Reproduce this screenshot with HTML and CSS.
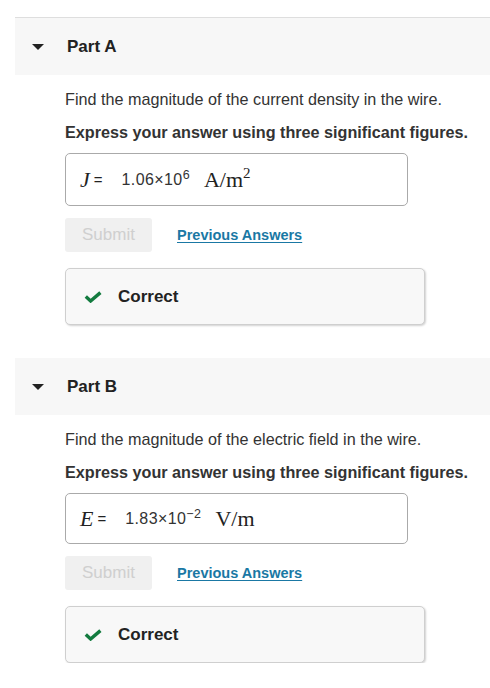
FILE: index.html
```html
<!DOCTYPE html>
<html>
<head>
<meta charset="utf-8">
<link rel="stylesheet" href="styles.css">
</head>
<body>
<div class="page">
  <section class="part part-first">
    <div class="part-head">
      <span class="caret"></span>
      <h2 class="part-title">Part A</h2>
    </div>
    <div class="part-body">
      <p class="question">Find the magnitude of the current density in the wire.</p>
      <p class="instr">Express your answer using three significant figures.</p>
      <div class="answer answer-tall">
        <span class="var">J</span><span class="eq">=</span>
        <span class="num">1.06×10<sup class="exp">6</sup></span>
        <span class="unit">A/m<sup class="uexp">2</sup></span>
      </div>
      <div class="actions">
        <span class="submit">Submit</span>
        <a class="prev" href="#">Previous Answers</a>
      </div>
      <div class="result">
        <svg class="check" width="18" height="12" viewBox="0 0 18 12"><path d="M1.8 5.6 L6.6 10 L16.4 1.6" fill="none" stroke="#137b3f" stroke-width="3.4"/></svg>
        <span class="result-text">Correct</span>
      </div>
    </div>
  </section>
  <section class="part">
    <div class="part-head">
      <span class="caret"></span>
      <h2 class="part-title">Part B</h2>
    </div>
    <div class="part-body">
      <p class="question">Find the magnitude of the electric field in the wire.</p>
      <p class="instr">Express your answer using three significant figures.</p>
      <div class="answer">
        <span class="var">E</span><span class="eq">=</span>
        <span class="num">1.83×10<sup class="exp">−2</sup></span>
        <span class="unit">V/m</span>
      </div>
      <div class="actions">
        <span class="submit">Submit</span>
        <a class="prev" href="#">Previous Answers</a>
      </div>
      <div class="result">
        <svg class="check" width="18" height="12" viewBox="0 0 18 12"><path d="M1.8 5.6 L6.6 10 L16.4 1.6" fill="none" stroke="#137b3f" stroke-width="3.4"/></svg>
        <span class="result-text">Correct</span>
      </div>
    </div>
  </section>
</div>
</body>
</html>
```
FILE: styles.css
```css
html, body {
  margin: 0;
  padding: 0;
  background: #fff;
}
body {
  font-family: "Liberation Sans", Arial, sans-serif;
  color: #333;
}
.page {
  padding-top: 17px;
  padding-left: 15px;
}
.part-first {
  border-top: 1px solid #dedede;
}
.part + .part {
  margin-top: 33px;
}
.part-head {
  height: 57px;
  background: #f7f7f7;
  display: flex;
  align-items: center;
  padding-left: 17px;
}
.caret {
  width: 0;
  height: 0;
  border-left: 6.5px solid transparent;
  border-right: 6.5px solid transparent;
  border-top: 6.5px solid #222;
  margin-top: 1px;
}
.part-title {
  margin: 0 0 0 23px;
  font-size: 17px;
  font-weight: bold;
  color: #222;
}
.part-body {
  padding-left: 50px;
  padding-top: 14px;
}
.question {
  margin: 0;
  font-size: 16.2px;
  line-height: 20px;
  color: #333;
}
.instr {
  margin: 13px 0 0;
  font-size: 16.2px;
  line-height: 20px;
  font-weight: bold;
  color: #333;
}
.answer {
  margin-top: 11px;
  width: 343px;
  height: 51px;
  border: 1px solid #aaa;
  border-radius: 5px;
  display: flex;
  align-items: center;
  padding-left: 14px;
  box-sizing: border-box;
  color: #222;
}
.answer-tall {
  height: 53px;
}
.var {
  font-family: "Liberation Serif", "Times New Roman", serif;
  font-style: italic;
  font-size: 22px;
  margin-right: 4px;
}
.eq {
  font-size: 15px;
  margin-right: 19px;
}
.num {
  font-size: 16px;
  letter-spacing: 0.4px;
  color: #333;
  margin-right: 14px;
}
.exp {
  font-size: 12.5px;
  letter-spacing: 0.4px;
  vertical-align: 6px;
  line-height: 0;
}
.unit {
  font-family: "Liberation Serif", "Times New Roman", serif;
  font-size: 22px;
}
.uexp {
  font-size: 15px;
  vertical-align: 9px;
  line-height: 0;
}
.actions {
  margin-top: 12px;
  display: flex;
  align-items: center;
}
.submit {
  width: 87px;
  height: 34px;
  background: #f0f0f0;
  border-radius: 3px;
  color: #cfcfcf;
  font-size: 17px;
  display: flex;
  align-items: center;
  justify-content: center;
}
.prev {
  margin-left: 25px;
  font-size: 14.5px;
  font-weight: bold;
  color: #1a78a4;
  text-decoration: underline;
  text-underline-offset: 2px;
}
.result {
  margin-top: 16px;
  width: 360px;
  height: 57px;
  box-sizing: border-box;
  background: #f8f8f8;
  border: 1px solid #cfcfcf;
  border-radius: 5px;
  box-shadow: 1px 1px 2px rgba(0, 0, 0, 0.18);
  display: flex;
  align-items: center;
  padding-left: 18px;
}
.check {
  display: block;
}
.result-text {
  margin-left: 16px;
  font-size: 17px;
  font-weight: bold;
  color: #222;
}
```
